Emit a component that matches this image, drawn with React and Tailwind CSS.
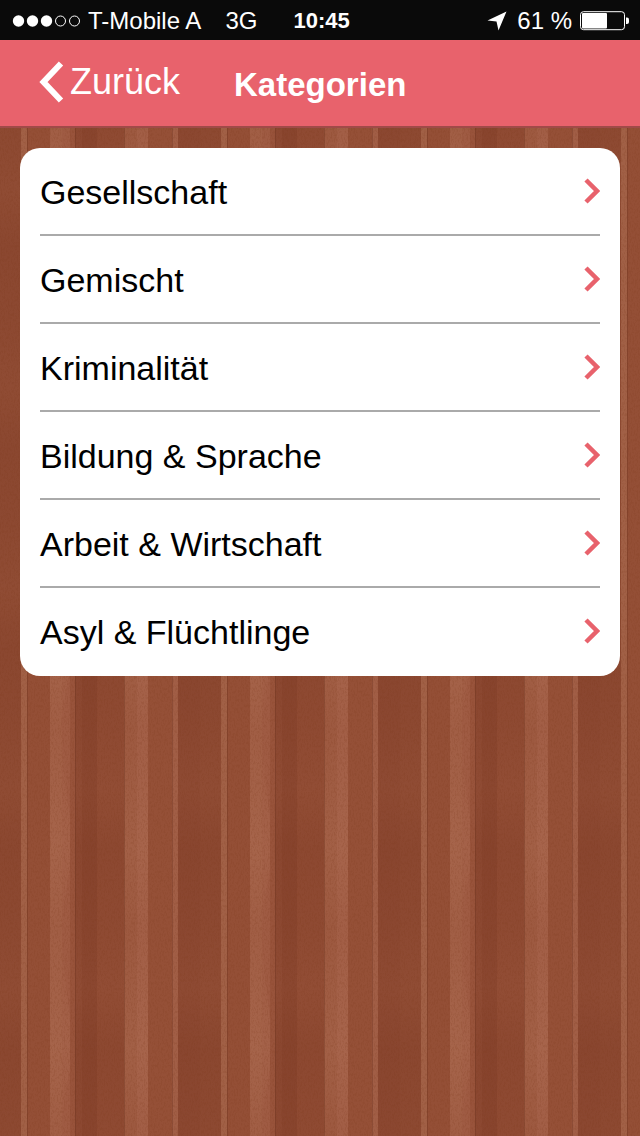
import React from 'react';

const categories = [
  'Gesellschaft',
  'Gemischt',
  'Kriminalität',
  'Bildung & Sprache',
  'Arbeit & Wirtschaft',
  'Asyl & Flüchtlinge'
];

// one board pattern, repeated every 200px
const planks = [
  { x: 0, width: 21, color: '#904c34' },
  { x: 21, width: 6, color: '#a16046' },
  { x: 27, width: 23, color: '#944f36' },
  { x: 50, width: 12, color: '#a15e45' },
  { x: 62, width: 8, color: '#9f5b43' },
  { x: 70, width: 5, color: '#98533b' },
  { x: 75, width: 7, color: '#8f4b34' },
  { x: 82, width: 15, color: '#8b4730' },
  { x: 97, width: 27, color: '#924d35' },
  { x: 124, width: 13, color: '#9d5940' },
  { x: 137, width: 11, color: '#a25e46' },
  { x: 148, width: 24, color: '#955037' },
  { x: 172, width: 6, color: '#a15e46' },
  { x: 178, width: 22, color: '#8e4a33' }
];

const seams = [27, 75, 124, 172];

const Wood = () => (
  <svg className="absolute inset-0 h-full w-full" aria-hidden="true">
    <defs>
      <linearGradient id="shine" x1="0" y1="0" x2="0" y2="1">
        <stop offset="0" stopColor="#c08468" stopOpacity="0" />
        <stop offset="0.6" stopColor="#c08468" stopOpacity="0.16" />
        <stop offset="1" stopColor="#c08468" stopOpacity="0" />
      </linearGradient>
      <linearGradient id="shade" x1="0" y1="0" x2="0" y2="1">
        <stop offset="0" stopColor="#702e1a" stopOpacity="0.1" />
        <stop offset="0.3" stopColor="#702e1a" stopOpacity="0" />
        <stop offset="0.6" stopColor="#702e1a" stopOpacity="0.16" />
        <stop offset="1" stopColor="#702e1a" stopOpacity="0.1" />
      </linearGradient>
      <pattern id="planks" width="200" height="200" y="600" patternUnits="userSpaceOnUse">
        {planks.map((plank) => (
          <rect key={plank.x} x={plank.x} width={plank.width} height="200" fill={plank.color} />
        ))}
        <path d="M50 0H62Q64 50 70 90V140Q64 170 62 200H50Z" fill="url(#shine)" />
        <rect x="124" width="24" height="200" fill="url(#shine)" />
        <rect x="178" width="22" height="200" fill="url(#shade)" />
        <rect x="75" width="49" height="200" fill="url(#shade)" />
        <rect x="0" width="21" height="200" fill="url(#shade)" />
        {seams.map((x) => (
          <rect key={x} x={x} width="1" height="200" fill="#6f3520" opacity="0.4" />
        ))}
      </pattern>
      <filter id="grain" x="0" y="0" width="100%" height="100%">
        <feTurbulence type="fractalNoise" baseFrequency="0.7 0.35" numOctaves="3" seed="4" />
        <feColorMatrix values="0 0 0 0 0.2  0 0 0 0 0.04  0 0 0 0 0.01  4 0 0 0 -1.8" />
      </filter>
    </defs>
    <rect width="100%" height="100%" fill="url(#planks)" />
    <rect width="100%" height="100%" filter="url(#grain)" opacity="0.16" />
  </svg>
);

const StatusBar = () => (
  <div className="flex h-10 items-center bg-[#0a0a0a] pt-0.5 pr-[11px] pl-3 text-2xl text-white">
    <svg className="mr-2 shrink-0" width="68" height="12" viewBox="0 0 68 12" aria-hidden="true">
      <circle cx="6.5" cy="6" r="5.7" fill="white" />
      <circle cx="20.5" cy="6" r="5.7" fill="white" />
      <circle cx="34.5" cy="6" r="5.7" fill="white" />
      <circle cx="48.5" cy="6" r="5" fill="none" stroke="white" />
      <circle cx="62.5" cy="6" r="5" fill="none" stroke="white" />
    </svg>
    <span>T-Mobile A</span>
    <span className="ml-6">3G</span>
    <span className="ml-9 text-[22px] font-bold">10:45</span>
    <div className="ml-auto flex items-center">
      <svg className="mr-2.5" width="20" height="20" viewBox="0 0 20 20" aria-hidden="true">
        <path d="M19.500 0.500 0.500 9.500 9.500 10.500 11.500 19.500Z" fill="white" />
      </svg>
      <span>61 %</span>
      <svg className="ml-2" width="49" height="20" viewBox="0 0 49 20" aria-hidden="true">
        <rect x="0.5" y="0.7" width="44" height="18" rx="3" fill="none" stroke="white" />
        <rect x="2" y="2" width="25" height="15.5" rx="1" fill="white" />
        <path d="M46 6.5h1a2 2 0 0 1 2 2v2.500a2 2 0 0 1-2 2h-1Z" fill="white" />
      </svg>
    </div>
  </div>
);

const App = () => {
  return (
    <div className="flex min-h-screen flex-col font-['Liberation_Sans',Arial,sans-serif]">
      <StatusBar />
      <header className="flex h-22 items-center border-b-2 border-[#a04a48] bg-[#e8626c] pt-0.5 pl-9 text-white">
        <button type="button" className="flex items-center gap-1 pb-1 text-4xl">
          <svg width="30" height="42" viewBox="0 0 30 42" aria-hidden="true">
            <path d="M25 2.500 7.500 21 25 39.500" fill="none" stroke="white" strokeWidth="6" />
          </svg>
          Zurück
        </button>
        <h1 className="ml-[54px] pt-0.5 text-[33px] font-bold">Kategorien</h1>
      </header>
      <main className="relative flex-1 p-5">
        <Wood />
        <ul className="relative rounded-[20px] bg-white px-5">
          {categories.map((category) => (
            <li key={category} className="h-22 border-b-2 border-[#aaaaaa] last:border-b-0">
              <button type="button" className="flex h-[86px] w-full items-center justify-between text-left text-[34px] text-black">
                <span className="pt-0.5">{category}</span>
                <svg width="16" height="26" viewBox="0 0 16 26" aria-hidden="true">
                  <path d="M2 2 13 13 2 24" fill="none" stroke="#e8626c" strokeWidth="4.500" />
                </svg>
              </button>
            </li>
          ))}
        </ul>
      </main>
    </div>
  );
};

export default App;
